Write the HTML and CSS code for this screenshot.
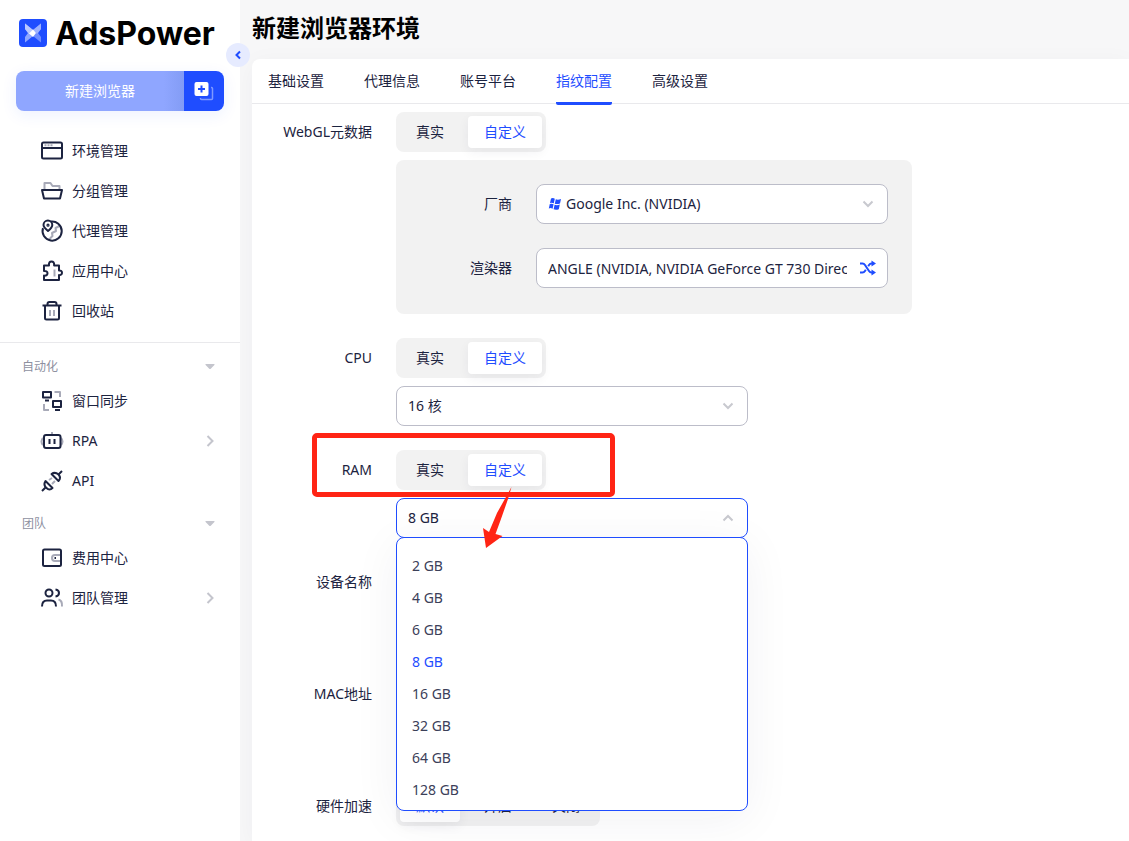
FILE: index.html
```html
<!DOCTYPE html>
<html lang="zh-CN">
<head>
<meta charset="utf-8">
<title>AdsPower - 新建浏览器环境</title>
<meta name="viewport" content="width=device-width, initial-scale=1">
<link rel="stylesheet" href="styles.css">
</head>
<body>
<div class="app">
  <aside class="sidebar">
    <div class="brand">
      <svg class="brand-mark" viewBox="0 0 28 28" aria-hidden="true">
        <rect width="28" height="28" rx="4" fill="#1f4dff"/>
        <path d="M6 4.500l8 6.500v6L6 23.500V18l3-4-3-4z" fill="#8fa6ff"/>
        <path d="M22 4.500L14 11v6l8 6.500V18l-3-4 3-4z" fill="#6f8dff"/>
        <path d="M6 4.500l8 6.500-4 4-4-5z" fill="#b9c7ff"/>
        <path d="M22 4.500L14 11l4 4 4-5z" fill="#9db1ff"/>
        <path d="M14 10.500l3 3.500-3 4-4-3.500z" fill="#fff"/>
      </svg>
      <span class="brand-name">AdsPower</span>
    </div>
    <div class="create">
      <button class="create-main" type="button">新建浏览器</button>
      <button class="create-batch" type="button" aria-label="批量新建">
        <svg width="20" height="20" viewBox="0 0 20 20" aria-hidden="true">
          <path d="M17 6.500h.5a1 1 0 0 1 1 1v10a1 1 0 0 1-1 1h-10a1 1 0 0 1-1-1V17" fill="none" stroke="#7f99ff" stroke-width="1.500"/>
          <rect x="0.500" y="1" width="14" height="14" rx="2" fill="#fff"/>
          <path d="M7.500 4.500v7M4 8h7" stroke="#1f4dff" stroke-width="2"/>
        </svg>
      </button>
    </div>
    <nav class="menu">
      <a class="menu-item" href="#">
        <svg class="icon" viewBox="0 0 24 24"><rect x="2" y="3.500" width="20" height="16" rx="1.500"/><path d="M2 9h20"/><path class="dim" stroke-dasharray="2 1" d="M4.500 6.300h8"/></svg>
        环境管理</a>
      <a class="menu-item" href="#">
        <svg class="icon" viewBox="0 0 24 24"><path class="dim" d="M4.500 10V4h6l2 3h7v3"/><path d="M2 11h20l-2 8.500H4z"/></svg>
        分组管理</a>
      <a class="menu-item" href="#">
        <svg class="icon" viewBox="0 0 24 24"><path class="dim" d="M19.500 7l-4 2 .5 3-4 2 .5 3-3 3"/><path d="M10.500 2.600a9.600 9.600 0 1 1-7.500 6.500"/><path d="M8 12C5 9.500 3.500 8 3.500 6a4.300 4.300 0 0 1 8.800 0C12.300 8 11 9.500 8 12z"/><circle cx="8" cy="6.200" r=".6"/></svg>
        代理管理</a>
      <a class="menu-item" href="#">
        <svg class="icon" viewBox="0 0 24 24"><path class="dim" d="M14.500 10.500v7"/><path d="M4 6.500h5c-.4-3 .8-4 2.500-4s3 1 2.600 4H19v5c2-.2 3 .8 3 2.300s-1 2.500-3 2.300v5H4v-4.500c2.500.2 3.500-.8 3.500-2.300S6.500 11.800 4 12z"/></svg>
        应用中心</a>
      <a class="menu-item" href="#">
        <svg class="icon" viewBox="0 0 24 24"><path class="dim" d="M10 11v6M14 11v6"/><path d="M2.500 6.500h19M7.500 6.500V5q0-2 2-2h5q2 0 2 2v1.500M5 6.500V19q0 1.500 1.500 1.500h11q1.500 0 1.500-1.500V6.500"/></svg>
        回收站</a>
    </nav>
    <div class="group-title"><span>自动化</span><svg class="caret" viewBox="0 0 10 6"><path d="M1 0h8q1 0 .4 1L5.500 5h-1L.6 1Q0 0 1 0z"/></svg></div>
    <nav>
      <a class="menu-item" href="#">
        <svg class="icon" viewBox="0 0 24 24"><path class="dim" d="M14.500 3H20v5M4 15v6h5"/><rect x="3" y="3" width="8" height="5.500"/><path d="M5 11.500h4"/><rect x="13" y="12" width="8" height="6"/><path d="M15 21h5"/></svg>
        窗口同步</a>
      <a class="menu-item" href="#">
        <svg class="icon" viewBox="0 0 24 24"><path class="dim" d="M12 3v3M3 9q-3 3.500 0 7M21 9q3 3.500 0 7"/><rect x="4" y="6" width="16.500" height="13" rx="2"/><path d="M9.500 10v5M14.500 10v5"/></svg>
        <span class="menu-text">RPA</span><svg class="arrow" viewBox="0 0 8 12"><path d="M1.500 1l5 5-5 5"/></svg></a>
      <a class="menu-item" href="#">
        <svg class="icon" viewBox="0 0 24 24"><path class="dim" d="M9 11l3-2M12 15l3-3"/><path d="M2 22l4-4M5.500 12l7 7q-3 3-6 0-3.500-3-1-7zM22 2l-4 4M11.500 5l7 7q3-3 0-6.500-3.500-3-7-.5z"/></svg>
        API</a>
    </nav>
    <div class="group-title group-title-next"><span>团队</span><svg class="caret" viewBox="0 0 10 6"><path d="M1 0h8q1 0 .4 1L5.500 5h-1L.6 1Q0 0 1 0z"/></svg></div>
    <nav>
      <a class="menu-item" href="#">
        <svg class="icon" viewBox="0 0 24 24"><path class="dim" d="M21 9h-6q-3 0-3 3t3 3h6"/><rect x="3" y="3.500" width="18" height="16.500" rx="1.500"/><path d="M14.500 12h1.500"/></svg>
        费用中心</a>
      <a class="menu-item" href="#">
        <svg class="icon" viewBox="0 0 24 24"><path class="dim" d="M18.500 13.500q4 1 3.500 7"/><circle cx="9" cy="7" r="3.500"/><path d="M2 20.500q0-6 5-6h4q5 0 5 6M15.500 3.500q3.500.5 3.500 3.500t-3.500 3.500"/></svg>
        <span class="menu-text">团队管理</span><svg class="arrow" viewBox="0 0 8 12"><path d="M1.500 1l5 5-5 5"/></svg></a>
    </nav>
    <button class="collapse" type="button" aria-label="收起侧栏">
      <svg width="6" height="10" viewBox="0 0 6 10"><path d="M5 1.500L1.500 5 5 8.500" fill="none" stroke="#1f4dff" stroke-width="2"/></svg>
    </button>
  </aside>

  <main class="main">
    <h1 class="title">新建浏览器环境</h1>
    <section class="panel">
      <nav class="tabs">
        <a class="tab" href="#">基础设置</a>
        <a class="tab" href="#">代理信息</a>
        <a class="tab" href="#">账号平台</a>
        <a class="tab tab-active" href="#" aria-current="page">指纹配置</a>
        <a class="tab" href="#">高级设置</a>
      </nav>
      <form class="form">
        <div class="row">
          <span class="label" id="l-webgl">WebGL元数据</span>
          <div class="field">
            <div class="segment" role="radiogroup" aria-labelledby="l-webgl">
              <label class="option"><input type="radio" name="webgl">真实</label>
              <label class="option"><input type="radio" name="webgl" checked>自定义</label>
            </div>
            <div class="card">
              <label class="label" for="vendor">厂商</label>
              <div class="control">
                <svg class="vendor-icon" viewBox="0 0 14 14" aria-hidden="true"><path d="M3 1.500Q5 .5 6.800 1.800L5.800 6.300Q4 5.200 2 6zM7.800 2.300Q10 3.200 13 2L12 6.500Q9 7.600 6.800 6.700zM1.800 7Q3.800 6.200 5.600 7.300L4.600 11.800Q2.800 10.600.8 11.500zM6.600 7.800Q9 8.700 11.800 7.600L10.800 12.200Q8 13.300 5.600 12.300z"/></svg>
                <select class="input input-vendor" id="vendor"><option>Google Inc. (NVIDIA)</option></select>
                <svg class="chevron" viewBox="0 0 12 8"><path d="M1.500 1.500L6 6l4.500-4.500"/></svg>
              </div>
              <label class="label" for="renderer">渲染器</label>
              <div class="control">
                <input class="input input-renderer" id="renderer" value="ANGLE (NVIDIA, NVIDIA GeForce GT 730 Direct3D11)">
                <button class="shuffle" type="button" aria-label="随机">
                  <svg width="16" height="16" viewBox="0 0 16 16"><path d="M0 3.500h2.500q1.500 0 2.500 1.500l4 6q1 1.500 2.500 1.500H14M0 12.500h2.500q1.500 0 2.500-1.500l.8-1.200M8.200 6.200L9 5q1-1.500 2.500-1.500H14" fill="none" stroke="#1f4dff" stroke-width="2"/><path d="M11.500.5L16 3.500l-4.500 3zM11.500 9.500l4.500 3-4.500 3z" fill="#1f4dff"/></svg>
                </button>
              </div>
            </div>
          </div>
        </div>
        <div class="row">
          <label class="label" for="cpu">CPU</label>
          <div class="field">
            <div class="segment" role="radiogroup" aria-label="CPU">
              <label class="option"><input type="radio" name="cpu">真实</label>
              <label class="option"><input type="radio" name="cpu" checked>自定义</label>
            </div>
            <div class="control">
              <select class="input" id="cpu"><option>16 核</option></select>
              <svg class="chevron" viewBox="0 0 12 8"><path d="M1.500 1.500L6 6l4.500-4.500"/></svg>
            </div>
          </div>
        </div>
        <div class="row row-ram">
          <label class="label" for="ram">RAM</label>
          <div class="field">
            <div class="segment" role="radiogroup" aria-label="RAM">
              <label class="option"><input type="radio" name="ram">真实</label>
              <label class="option"><input type="radio" name="ram" checked>自定义</label>
            </div>
            <div class="control">
              <select class="input input-open" id="ram"><option>8 GB</option></select>
              <svg class="chevron" viewBox="0 0 12 8"><path d="M1.500 6.500L6 2l4.500 4.500"/></svg>
              <ul class="dropdown" role="listbox" aria-label="RAM">
                <li class="choice" role="option">2 GB</li>
                <li class="choice" role="option">4 GB</li>
                <li class="choice" role="option">6 GB</li>
                <li class="choice choice-active" role="option" aria-selected="true">8 GB</li>
                <li class="choice" role="option">16 GB</li>
                <li class="choice" role="option">32 GB</li>
                <li class="choice" role="option">64 GB</li>
                <li class="choice" role="option">128 GB</li>
              </ul>
            </div>
          </div>
          <div class="highlight"></div>
          <svg class="pointer" viewBox="0 0 32 64" aria-hidden="true"><path d="M31.500 1L28 13 21 33 15.500 48l7 2L6 62 3 42l6 4 8-19z" fill="#ff2414"/></svg>
        </div>
        <div class="row row-tall">
          <label class="label" for="device">设备名称</label>
          <div class="control"><input class="input" id="device"></div>
        </div>
        <div class="row row-tall">
          <label class="label" for="mac">MAC地址</label>
          <div class="control"><input class="input" id="mac"></div>
        </div>
        <div class="row">
          <span class="label" id="l-hw">硬件加速</span>
          <div class="field">
            <div class="segment" role="radiogroup" aria-labelledby="l-hw">
              <label class="option"><input type="radio" name="hw" checked>默认</label>
              <label class="option"><input type="radio" name="hw">开启</label>
              <label class="option"><input type="radio" name="hw">关闭</label>
            </div>
          </div>
        </div>
      </form>
    </section>
  </main>
</div>
</body>
</html>
```
FILE: styles.css
```css
* {
  box-sizing: border-box;
}

body {
  margin: 0;
  background: #f7f7f8;
  color: #1c2340;
  font: 14px/20px "Noto Sans", "Noto Sans CJK SC", sans-serif;
}

button,
input,
select {
  font: inherit;
  color: inherit;
}

button {
  border: 0;
  padding: 0;
  cursor: pointer;
}

a {
  color: inherit;
  text-decoration: none;
}

.app {
  display: flex;
  min-height: 100vh;
}

/* Sidebar */
.sidebar {
  position: relative;
  flex: 0 0 240px;
  background: #fff;
}

.brand {
  display: flex;
  align-items: center;
  gap: 8px;
  height: 66px;
  padding-left: 19px;
}

.brand-mark {
  width: 28px;
  height: 28px;
}

.brand-name {
  padding-top: 2px;
  color: #000;
  font: 700 32px/40px Inter, sans-serif;
}

.create {
  display: flex;
  height: 40px;
  margin: 5px 16px 0;
  border-radius: 8px;
  overflow: hidden;
  box-shadow: 0 4px 16px #1f4dff14;
}

.create-main {
  flex: 1;
  background: linear-gradient(90deg, #8fa6ff 88%, #839cf5);
  color: #fff;
}

.create-batch {
  display: flex;
  align-items: center;
  justify-content: center;
  width: 40px;
  background: #1f4dff;
}

.menu {
  padding: 20px 0 11px;
  border-bottom: 1px solid #e9e9ec;
}

.menu-item {
  display: flex;
  align-items: center;
  gap: 8px;
  height: 40px;
  padding: 0 24px 0 40px;
}

.menu-text {
  flex: 1;
}

.icon {
  width: 24px;
  height: 24px;
  fill: none;
  stroke: #1c2340;
  stroke-width: 2;
  stroke-linejoin: round;
}

.icon .dim {
  stroke: #a8aab8;
}

.arrow {
  width: 8px;
  height: 12px;
  margin-right: 2px;
  fill: none;
  stroke: #c4c5cd;
  stroke-width: 2;
}

.group-title {
  display: flex;
  align-items: center;
  justify-content: space-between;
  height: 28px;
  margin-top: 10px;
  padding: 0 25px 0 22px;
  color: #8e909f;
  font-size: 12px;
}

.group-title-next {
  margin-top: 9px;
}

.caret {
  width: 10px;
  height: 6px;
  fill: #c4c5cd;
}

.collapse {
  position: absolute;
  top: 43px;
  right: -10px;
  display: flex;
  align-items: center;
  justify-content: center;
  width: 24px;
  height: 24px;
  border-radius: 50%;
  background: #e6ebff;
}

/* Main area */
.main {
  display: flex;
  flex: 1;
  flex-direction: column;
  min-width: 0;
  padding-left: 12px;
}

.title {
  margin: 0;
  height: 59px;
  color: #000;
  font-size: 24px;
  font-weight: 700;
  line-height: 56px;
}

.panel {
  flex: 1;
  border-top-left-radius: 8px;
  background: #fff;
  box-shadow: 0 4px 24px #1c23400a;
}

.tabs {
  display: flex;
  gap: 40px;
  height: 45px;
  padding: 0 16px;
  border-bottom: 1px solid #e9e9ec;
}

.tab {
  height: 46px;
  line-height: 44px;
}

.tab-active {
  border-bottom: 3px solid #1f4dff;
  border-radius: 2px;
  color: #1f4dff;
}

.form {
  display: grid;
  gap: 24px;
  padding: 8px 0;
}

.row {
  display: grid;
  grid-template-columns: 120px 1fr;
  column-gap: 24px;
}

.row-ram {
  position: relative;
}

.row-tall {
  min-height: 88px;
}

.label {
  line-height: 40px;
  text-align: right;
}

.field {
  display: grid;
  gap: 8px;
  justify-items: start;
}

.segment {
  display: flex;
  gap: 8px;
  padding: 4px;
  border-radius: 8px;
  background: #f2f2f2;
}

.option {
  padding: 0 16px;
  border-radius: 4px;
  line-height: 32px;
}

.option input {
  position: absolute;
  margin: 0;
  opacity: 0;
}

.option:has(:checked) {
  background: #fff;
  color: #1f4dff;
  box-shadow: 0 4px 12px #1c23400f;
}

.card {
  display: grid;
  grid-template-columns: 92px 352px;
  gap: 24px;
  padding: 24px 24px 26px;
  border-radius: 8px;
  background: #f2f2f2;
}

.control {
  position: relative;
  width: 352px;
}

.input {
  display: block;
  width: 100%;
  height: 40px;
  padding: 0 12px;
  border: 1px solid #bcbdc9;
  border-radius: 8px;
  outline: 0;
  background: #fff;
  appearance: none;
}

select.input {
  padding-left: 11px;
}

select.input-vendor {
  padding-left: 29px;
}

.input-renderer {
  padding: 0 40px 0 11px;
}

.input-open {
  border-color: #1f4dff;
}

.vendor-icon {
  position: absolute;
  top: 13px;
  left: 12px;
  width: 14px;
  height: 14px;
  fill: #1f4dff;
}

.chevron {
  position: absolute;
  top: 16px;
  right: 14px;
  width: 12px;
  height: 8px;
  fill: none;
  stroke: #c8c9cf;
  stroke-width: 2;
  pointer-events: none;
}

.shuffle {
  position: absolute;
  top: 12px;
  right: 12px;
  width: 16px;
  height: 16px;
  background: none;
}

.shuffle svg {
  display: block;
}

.dropdown {
  position: absolute;
  top: 39px;
  left: 0;
  right: 0;
  z-index: 2;
  margin: 0;
  padding: 12px 0 4px;
  border: 1px solid #1f4dff;
  border-radius: 8px;
  background: #fff;
  box-shadow: 0 8px 48px #1c23400f;
  list-style: none;
}

.choice {
  padding: 0 15px;
  color: #3b4059;
  line-height: 32px;
}

.choice-active {
  color: #1f4dff;
}

/* Annotation over the RAM row */
.highlight {
  position: absolute;
  top: -17px;
  left: 60px;
  width: 303px;
  height: 64px;
  border: 5px solid #ff2414;
  border-radius: 5px;
  pointer-events: none;
}

.pointer {
  position: absolute;
  top: 36px;
  left: 228px;
  z-index: 3;
  width: 32px;
  height: 64px;
  pointer-events: none;
}
```
